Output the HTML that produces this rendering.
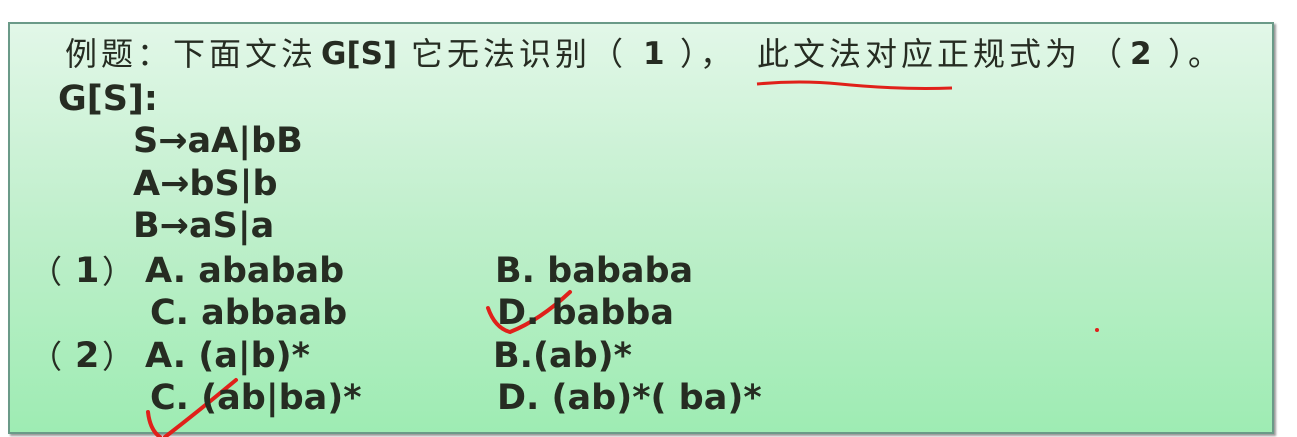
<!DOCTYPE html>
<html><head><meta charset="utf-8"><style>
body{margin:0;width:1297px;height:437px;background:#fff;position:relative;overflow:hidden}
.box{position:absolute;left:8px;top:22px;width:1262px;height:408px;border:2px solid #6a9a88;background:linear-gradient(#e2f7e8,#bfefcb 50%,#9eecb3);box-shadow:2px 2px 2px #999}
.t{position:absolute;white-space:pre;color:#262c22;line-height:1}
.c{font-family:"Liberation Sans","Noto Sans CJK SC",sans-serif;font-size:32px;letter-spacing:4px;top:38px}
.b{font-family:"DejaVu Sans","Liberation Sans",sans-serif;font-weight:bold;font-size:35px}
</style></head><body>
<div class="box"></div>
<div class="t c" style="left:65px">例题：下面文法</div>
<div class="t b" style="left:321px;top:39px;font-size:31px">G[S]</div>
<div class="t c" style="left:411px">它无法识别（</div>
<div class="t b" style="left:643px;top:39px;font-size:31px">1</div>
<div class="t c" style="left:680px">），</div>
<div class="t c" style="left:757px">此文法对应正规式为</div>
<div class="t c" style="left:1090px">（</div>
<div class="t b" style="left:1130px;top:39px;font-size:31px">2</div>
<div class="t c" style="left:1168px">）。</div>
<svg style="position:absolute;left:0;top:0" width="1297" height="437">
<path d="M757 84 Q800 80 840 84 Q900 90 952 88" stroke="#e0201a" stroke-width="3" fill="none"/>
<path d="M488 308 Q495 328 510 332 Q540 320 570 292" stroke="#e0201a" stroke-width="4" fill="none" stroke-linecap="round"/>
<path d="M148 412 Q150 430 160 437 M165 437 Q200 410 236 380" stroke="#e0201a" stroke-width="4" fill="none" stroke-linecap="round"/>
<circle cx="1097" cy="330" r="2" fill="#e0201a"/>
</svg>
<div class="t b" style="left:58px;top:82px">G[S]:</div>
<div class="t b" style="left:133px;top:124px">S→aA|bB</div>
<div class="t b" style="left:133px;top:167px">A→bS|b</div>
<div class="t b" style="left:133px;top:209px">B→aS|a</div>
<div class="t c" style="left:30px;top:256px;letter-spacing:0">（</div>
<div class="t b" style="left:75px;top:254px">1</div>
<div class="t c" style="left:102px;top:256px;letter-spacing:0">）</div>
<div class="t b" style="left:145px;top:254px">A. ababab</div>
<div class="t b" style="left:495px;top:254px">B. bababa</div>
<div class="t b" style="left:150px;top:296px">C. abbaab</div>
<div class="t b" style="left:497px;top:296px">D. babba</div>
<div class="t c" style="left:30px;top:341px;letter-spacing:0">（</div>
<div class="t b" style="left:75px;top:339px">2</div>
<div class="t c" style="left:102px;top:341px;letter-spacing:0">）</div>
<div class="t b" style="left:145px;top:339px">A. (a|b)*</div>
<div class="t b" style="left:493px;top:339px">B.(ab)*</div>
<div class="t b" style="left:150px;top:381px">C. (ab|ba)*</div>
<div class="t b" style="left:497px;top:381px">D. (ab)*( ba)*</div>
</body></html>
